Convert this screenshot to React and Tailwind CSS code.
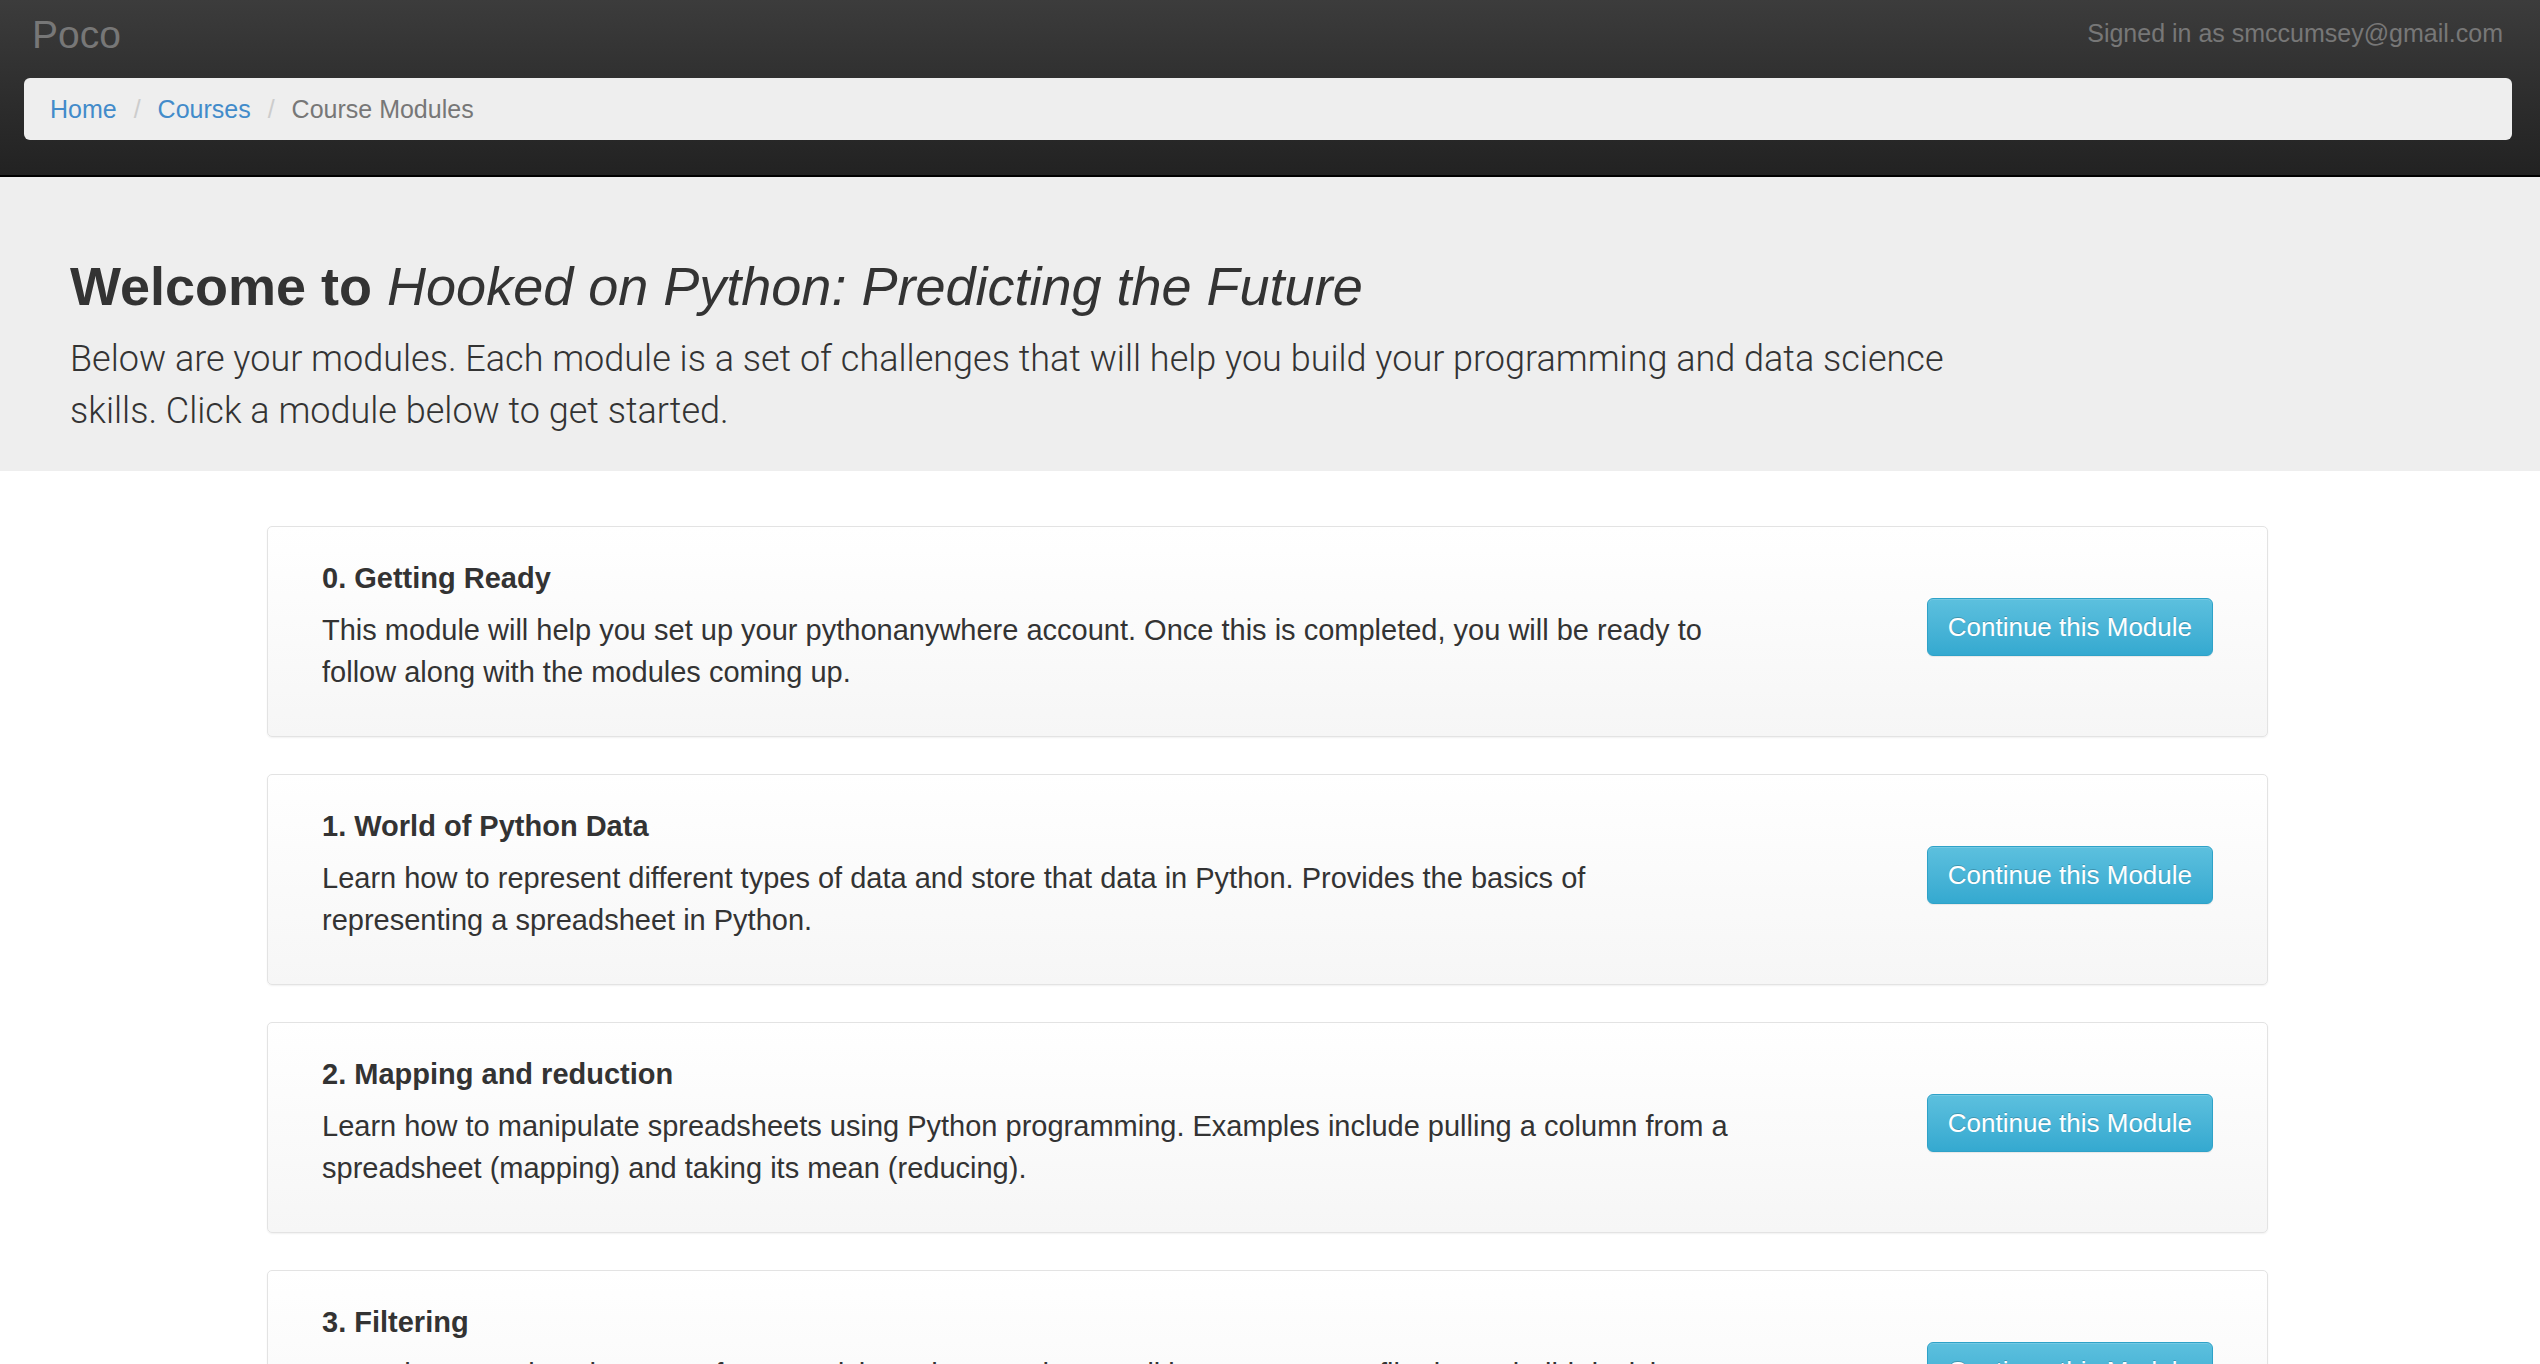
import React from 'react';

const modules = [
  {
    title: '0. Getting Ready',
    text: 'This module will help you set up your pythonanywhere account. Once this is completed, you will be ready to follow along with the modules coming up.',
  },
  {
    title: '1. World of Python Data',
    text: 'Learn how to represent different types of data and store that data in Python. Provides the basics of representing a spreadsheet in Python.',
  },
  {
    title: '2. Mapping and reduction',
    text: 'Learn how to manipulate spreadsheets using Python programming. Examples include pulling a column from a spreadsheet (mapping) and taking its mean (reducing).',
  },
  {
    title: '3. Filtering',
    text: 'Learn how to select the rows of a spreadsheet that match a condition. We use our filtering to build decision trees.',
  },
];

const ModuleCard = ({ title, text }) => (
  <div className="rounded-[5px] border border-[#e3e3e3] bg-linear-to-b from-[#ffffff] to-[#f6f6f6] pl-[54px] pr-[54px] pt-[30px] pb-[43px] shadow-[0_1px_2px_rgba(0,0,0,0.06)]">
    <div className="flex items-center">
      <div className="w-[1425px]">
        <h4 className="mb-[10px] text-[29px] font-bold leading-[42px] text-[#333]">{title}</h4>
        <p className="text-[29px] leading-[42px] text-[#333]">{text}</p>
      </div>
      <div className="flex flex-1 justify-end pt-[3px]">
        <button className="rounded-[6px] border border-[#2ea2c8] bg-linear-to-b from-[#5cc0de] to-[#34a9d0] px-[20px] py-[10px] text-[26px] leading-[36px] text-white shadow-[inset_0_1px_0_rgba(255,255,255,0.15),0_1px_1px_rgba(0,0,0,0.075)] [text-shadow:0_-1px_0_rgba(0,0,0,0.2)]">
          Continue this Module
        </button>
      </div>
    </div>
  </div>
);

export default function App() {
  return (
    <div className="min-h-screen bg-white font-['Liberation_Sans',Arial,sans-serif] text-[#333]">
      {/* Navbar */}
      <nav className="border-b-2 border-black bg-linear-to-b from-[#3c3c3c] to-[#222222] pb-[35px]">
        <div className="flex h-[78px] items-start justify-between pl-[32px] pr-[37px]">
          <a href="#" className="mt-[15px] text-[39px] leading-none text-[#777]">Poco</a>
          <span className="mt-[21px] text-[25px] leading-none text-[#777]">Signed in as smccumsey@gmail.com</span>
        </div>
        <div className="ml-[24px] mr-[28px] flex h-[62px] items-center rounded-[6px] bg-[#eeeeee] pl-[26px] text-[25px] leading-none">
          <a href="#" className="text-[#428bca]">Home</a>
          <span className="whitespace-pre px-[10px] pl-[17px] text-[#cccccc]">/{'\u00a0'}</span>
          <a href="#" className="text-[#428bca]">Courses</a>
          <span className="whitespace-pre px-[10px] pl-[17px] text-[#cccccc]">/{'\u00a0'}</span>
          <span className="text-[#777]">Course Modules</span>
        </div>
      </nav>

      {/* Jumbotron */}
      <div className="bg-[#eeeeee] pl-[70px] pt-[80px] pb-[34px]">
        <h1 className="text-[54px] font-bold leading-[1.1] text-[#333]">
          Welcome to <em className="font-normal">Hooked on Python: Predicting the Future</em>
        </h1>
        <p className="mt-[17px] font-['Roboto',sans-serif] text-[36px] font-light leading-[52px] text-[#333]">
          Below are your modules. Each module is a set of challenges that will help you build your programming and data science
          <br />
          skills. Click a module below to get started.
        </p>
      </div>

      {/* Modules */}
      <div className="ml-[267px] flex w-[2001px] flex-col gap-[37px] pt-[55px] pb-[40px]">
        {modules.map((m) => (
          <ModuleCard key={m.title} title={m.title} text={m.text} />
        ))}
      </div>
    </div>
  );
}
